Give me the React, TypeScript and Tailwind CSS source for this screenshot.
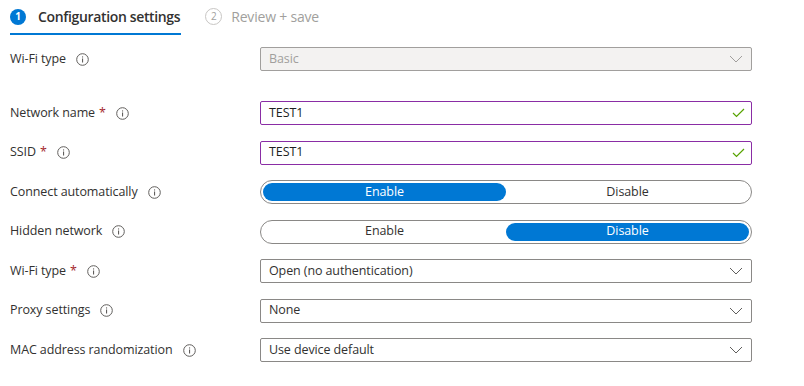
import React from 'react';

const font = { fontFamily: '"Segoe UI", "Open Sans", "Noto Sans", sans-serif' };

const InfoIcon: React.FC = () => (
  <svg width="13" height="13" viewBox="0 0 13 13" className="shrink-0">
    <circle cx="6.5" cy="6.5" r="5.8" fill="none" stroke="#605e5c" strokeWidth="1" />
    <rect x="6" y="5.5" width="1.1" height="4" fill="#605e5c" />
    <rect x="6" y="3.4" width="1.1" height="1.1" fill="#605e5c" />
  </svg>
);

const Chevron: React.FC<{ color?: string }> = ({ color = '#605e5c' }) => (
  <svg width="14" height="8" viewBox="0 0 14 8">
    <path d="M1 1 L7 7 L13 1" fill="none" stroke={color} strokeWidth="1" />
  </svg>
);

const Check: React.FC = () => (
  <svg width="13" height="10" viewBox="0 0 13 10">
    <path d="M1 5 L4.5 8.5 L12 1" fill="none" stroke="#57a300" strokeWidth="1.2" />
  </svg>
);

const Label: React.FC<{ text: string; required?: boolean }> = ({ text, required }) => (
  <div className="w-[250px] shrink-0 flex items-center text-[12.5px] tracking-[-0.1px] text-[#323130]">
    <span>{text}</span>
    {required && <span className="ml-1 text-[#a4262c]">*</span>}
    <span className="ml-[10px] flex items-center">
      <InfoIcon />
    </span>
  </div>
);

const TextField: React.FC<{ value: string }> = ({ value }) => (
  <div className="w-[492px] h-[24px] border border-[#8a2da5] rounded-[2px] flex items-center justify-between pl-[8px] pr-[6px] text-[12.5px] tracking-[-0.1px] text-[#201f1e]">
    <span>{value}</span>
    <Check />
  </div>
);

const Dropdown: React.FC<{ value: string; disabled?: boolean }> = ({ value, disabled }) => (
  <div
    className={
      disabled
        ? 'w-[492px] h-[24px] border border-[#a19f9d] bg-[#f3f2f1] rounded-[2px] flex items-center justify-between pl-[8px] pr-[8px] text-[12.5px] tracking-[-0.1px] text-[#a19f9d]'
        : 'w-[492px] h-[24px] border border-[#8a8886] bg-white rounded-[2px] flex items-center justify-between pl-[8px] pr-[8px] text-[12.5px] tracking-[-0.1px] text-[#323130]'
    }
  >
    <span>{value}</span>
    <Chevron color={disabled ? '#a19f9d' : '#605e5c'} />
  </div>
);

const Toggle: React.FC<{ enabled: boolean }> = ({ enabled }) => (
  <div className="w-[492px] h-[24px] border border-[#8a8886] rounded-full flex items-stretch p-[2px] text-[12.5px] tracking-[-0.1px]">
    <div
      className={
        enabled
          ? 'flex-1 rounded-full bg-[#0078d4] text-white flex items-center justify-center'
          : 'flex-1 rounded-full text-[#323130] flex items-center justify-center'
      }
    >
      Enable
    </div>
    <div
      className={
        !enabled
          ? 'flex-1 rounded-full bg-[#0078d4] text-white flex items-center justify-center'
          : 'flex-1 rounded-full text-[#323130] flex items-center justify-center'
      }
    >
      Disable
    </div>
  </div>
);

const Row: React.FC<{ label: string; required?: boolean; children: React.ReactNode }> = ({
  label,
  required,
  children,
}) => (
  <div className="flex items-center">
    <Label text={label} required={required} />
    {children}
  </div>
);

export default function App() {
  return (
    <div className="w-[804px] h-[386px] bg-white overflow-hidden" style={font}>
      {/* Steps */}
      <div className="flex items-end pl-[10px] h-[35px]">
        <div className="flex items-center gap-[12px] h-[35px] border-b-2 border-[#0078d4] pr-[1px]">
          <span className="w-[16px] h-[16px] rounded-full bg-[#0078d4] text-white text-[10px] font-bold flex items-center justify-center">
            1
          </span>
          <span className="text-[14px] tracking-[-0.35px] font-semibold text-[#323130]">Configuration settings</span>
        </div>
        <div className="flex items-center gap-[9px] h-[35px] ml-[24px] pb-[2px]">
          <span className="w-[17px] h-[17px] rounded-full border border-[#c8c6c4] text-[#a19f9d] text-[10px] flex items-center justify-center">
            2
          </span>
          <span className="text-[14px] tracking-[-0.2px] text-[#a19f9d]">Review + save</span>
        </div>
      </div>

      {/* Form */}
      <div className="pl-[10px] pt-[12px]">
        <Row label="Wi-Fi type">
          <Dropdown value="Basic" disabled />
        </Row>
        <div className="flex flex-col gap-[15.5px] mt-[30px]">
          <Row label="Network name" required>
            <TextField value="TEST1" />
          </Row>
          <Row label="SSID" required>
            <TextField value="TEST1" />
          </Row>
          <Row label="Connect automatically">
            <Toggle enabled />
          </Row>
          <Row label="Hidden network">
            <Toggle enabled={false} />
          </Row>
          <Row label="Wi-Fi type" required>
            <Dropdown value="Open (no authentication)" />
          </Row>
          <Row label="Proxy settings">
            <Dropdown value="None" />
          </Row>
          <Row label="MAC address randomization">
            <Dropdown value="Use device default" />
          </Row>
        </div>
      </div>
    </div>
  );
}
